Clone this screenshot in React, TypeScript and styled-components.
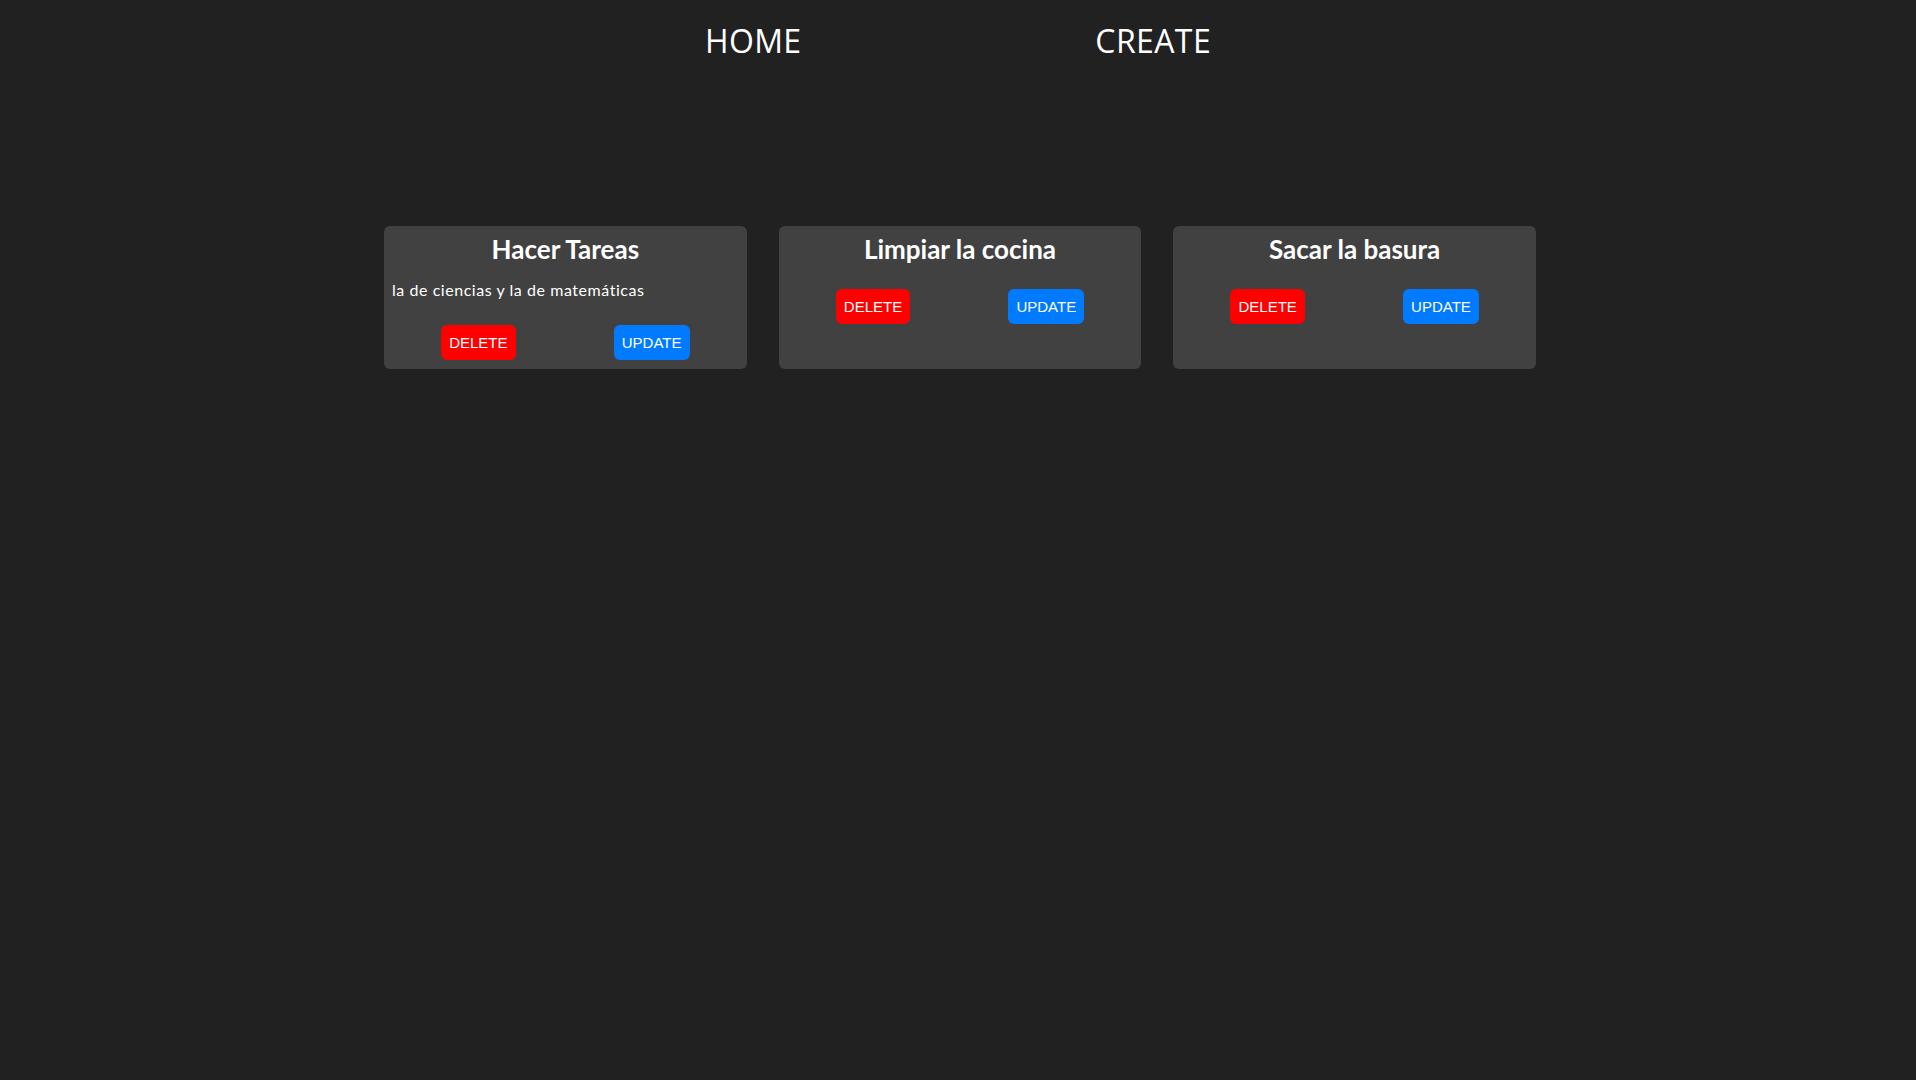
import React from 'react';
import styled, { createGlobalStyle } from 'styled-components';

const GlobalStyle = createGlobalStyle`
  body {
    margin: 0;
    background-color: #212121;
    font-family: 'Lato', 'Noto Sans', sans-serif;
    color: #fff;
  }
`;

const Nav = styled.nav`
  max-width: 800px;
  margin: 0 auto;
  padding-top: 19px;
  display: flex;
  justify-content: space-around;
`;

const NavLink = styled.a`
  font-family: 'Open Sans', sans-serif;
  font-size: 32px;
  line-height: 44px;
  letter-spacing: 0.4px;
  color: #fff;
  text-decoration: none;
  cursor: pointer;
`;

const TaskGrid = styled.main`
  width: 1152px;
  margin: 163px 0 0 calc(50% - 574px);
  display: grid;
  grid-template-columns: repeat(3, 1fr);
  gap: 32px;
`;

const TaskCard = styled.div`
  background-color: #414141;
  border-radius: 6px;
  padding: 8px 8px 9px;
  display: flex;
  flex-direction: column;
`;

const TaskTitle = styled.h2`
  margin: 0;
  font-size: 26px;
  line-height: 30px;
  font-weight: 700;
  text-align: center;
`;

const TaskDescription = styled.p`
  margin: 16px 0 0;
  font-size: 16px;
  line-height: 20px;
  letter-spacing: 0.55px;
`;

const Actions = styled.div`
  margin-top: 25px;
  display: flex;
  justify-content: space-around;
`;

const ActionButton = styled.button<{ variant: 'delete' | 'update' }>`
  height: 35px;
  padding: 0 8px;
  border: none;
  border-radius: 6px;
  font-family: 'Liberation Sans', Arial, sans-serif;
  font-size: 15px;
  color: #fff;
  cursor: pointer;
  background-color: ${({ variant }) => (variant === 'delete' ? '#ff0000' : '#007bff')};
`;

interface Task {
  id: number;
  title: string;
  description: string;
}

const tasks: Task[] = [
  { id: 1, title: 'Hacer Tareas', description: 'la de ciencias y la de matemáticas' },
  { id: 2, title: 'Limpiar la cocina', description: '' },
  { id: 3, title: 'Sacar la basura', description: '' },
];

const App: React.FC = () => {
  return (
    <>
      <GlobalStyle />
      <Nav>
        <NavLink>HOME</NavLink>
        <NavLink>CREATE</NavLink>
      </Nav>
      <TaskGrid>
        {tasks.map(task => (
          <TaskCard key={task.id}>
            <TaskTitle>{task.title}</TaskTitle>
            {task.description && <TaskDescription>{task.description}</TaskDescription>}
            <Actions>
              <ActionButton variant="delete">DELETE</ActionButton>
              <ActionButton variant="update">UPDATE</ActionButton>
            </Actions>
          </TaskCard>
        ))}
      </TaskGrid>
    </>
  );
};

export default App;
